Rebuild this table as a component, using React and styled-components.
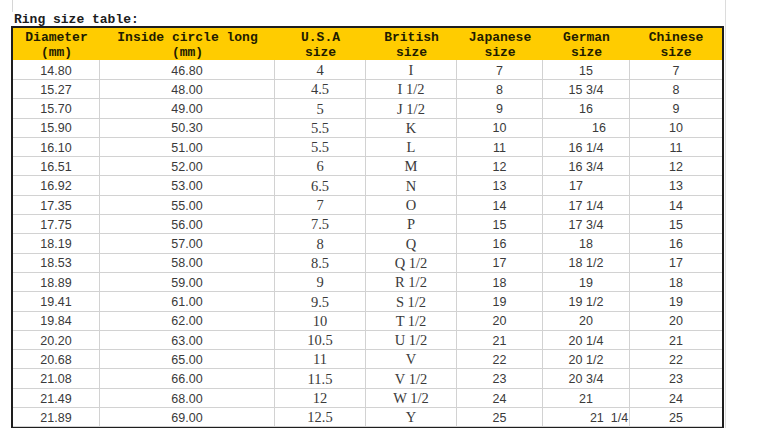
import React from "react";
import styled, { createGlobalStyle } from "styled-components";

const GlobalStyle = createGlobalStyle`
  html, body {
    margin: 0;
    padding: 0;
    background: #ffffff;
  }
  body {
    width: 760px;
    height: 428px;
    overflow: hidden;
  }
`;

const COLS = "87px 175px 91px 91px 86px 87px 92px";

const Sheet = styled.div`
  width: 726px;
  height: 428px;
  border-right: 1px solid #dcdcdc;
  padding-left: 11px;
  box-sizing: border-box;
`;

const TopGap = styled.div`
  height: 12px;
  margin-left: 1px;
  border-left: 1px solid #d6d6d6;
`;

const Title = styled.div`
  font-family: "Liberation Mono", "DejaVu Sans Mono", monospace;
  font-weight: bold;
  font-size: 13px;
  line-height: 15px;
  height: 14px;
  color: #1c1c1c;
  padding-left: 3px;
  white-space: pre;
`;

const Table = styled.div`
  width: 713px;
  border: 2px solid #1e1e1e;
  border-bottom-width: 1px;
  box-sizing: border-box;
`;

const HeadRow = styled.div`
  display: grid;
  grid-template-columns: ${COLS};
  height: 32px;
  background: #ffcc00;
`;

const HeadCell = styled.div`
  display: flex;
  flex-direction: column;
  align-items: center;
  justify-content: center;
  padding-top: 2px;
  font-family: "Liberation Mono", "DejaVu Sans Mono", monospace;
  font-weight: bold;
  font-size: 13px;
  line-height: 15px;
  color: #221c00;
  white-space: pre;
`;

const Row = styled.div`
  display: grid;
  grid-template-columns: ${COLS};
  height: 19.3px;
`;

const Cell = styled.div`
  box-sizing: border-box;
  display: flex;
  align-items: center;
  justify-content: center;
  padding-top: 2px;
  border-bottom: 1px solid #d2d2d2;
  border-right: ${(p) => (p.$last ? "none" : "1px solid #d2d2d2")};
  font-family: ${(p) =>
    p.$serif
      ? '"Liberation Serif", "DejaVu Serif", serif'
      : '"Liberation Sans", Arial, sans-serif'};
  font-size: ${(p) => p.$size || 12.5}px;
  color: #3a3a3a;
  white-space: pre;
  padding-left: ${(p) => (p.$nudge > 0 ? p.$nudge * 2 : 0)}px;
  padding-right: ${(p) => (p.$nudge < 0 ? -p.$nudge * 2 : 0)}px;
`;

const headers = [
  ["Diameter", "(mm)"],
  ["Inside circle long", "(mm)"],
  ["U.S.A", "size"],
  ["British", "size"],
  ["Japanese", "size"],
  ["German", "size"],
  ["Chinese", "size"],
];

const diameter = ["14.80", "15.27", "15.70", "15.90", "16.10", "16.51", "16.92", "17.35", "17.75", "18.19", "18.53", "18.89", "19.41", "19.84", "20.20", "20.68", "21.08", "21.49", "21.89"];
const inside = ["46.80", "48.00", "49.00", "50.30", "51.00", "52.00", "53.00", "55.00", "56.00", "57.00", "58.00", "59.00", "61.00", "62.00", "63.00", "65.00", "66.00", "68.00", "69.00"];
const usa = ["4", "4.5", "5", "5.5", "5.5", "6", "6.5", "7", "7.5", "8", "8.5", "9", "9.5", "10", "10.5", "11", "11.5", "12", "12.5"];
const british = ["I", "I 1/2", "J 1/2", "K", "L", "M", "N", "O", "P", "Q", "Q 1/2", "R 1/2", "S 1/2", "T 1/2", "U 1/2", "V", "V 1/2", "W 1/2", "Y"];
const german = ["15", "15 3/4", "16", "16", "16 1/4", "16 3/4", "17", "17 1/4", "17 3/4", "18", "18 1/2", "19", "19 1/2", "20", "20 1/4", "20 1/2", "20 3/4", "21", "21  1/4"];
// the sheet's German column is not evenly centred
const germanNudge = [0, 0, 0, 13, 0, 0, -10, 0, 0, 0, 0, 0, 0, 0, 0, 0, 0, 0, 23];

const App = () => {
  return (
    <>
      <GlobalStyle />
      <Sheet>
        <TopGap />
        <Title>Ring size table:</Title>
        <Table>
          <HeadRow>
            {headers.map(([a, b]) => (
              <HeadCell key={a}>
                <span>{a}</span>
                <span>{b}</span>
              </HeadCell>
            ))}
          </HeadRow>
          {diameter.map((d, i) => (
            <Row key={d}>
              <Cell>{d}</Cell>
              <Cell>{inside[i]}</Cell>
              <Cell $serif $size={14.5}>{usa[i]}</Cell>
              <Cell $serif $size={14.5}>{british[i]}</Cell>
              <Cell>{i + 7}</Cell>
              <Cell $nudge={germanNudge[i]}>{german[i]}</Cell>
              <Cell $last>{i + 7}</Cell>
            </Row>
          ))}
        </Table>
      </Sheet>
    </>
  );
};

export default App;
